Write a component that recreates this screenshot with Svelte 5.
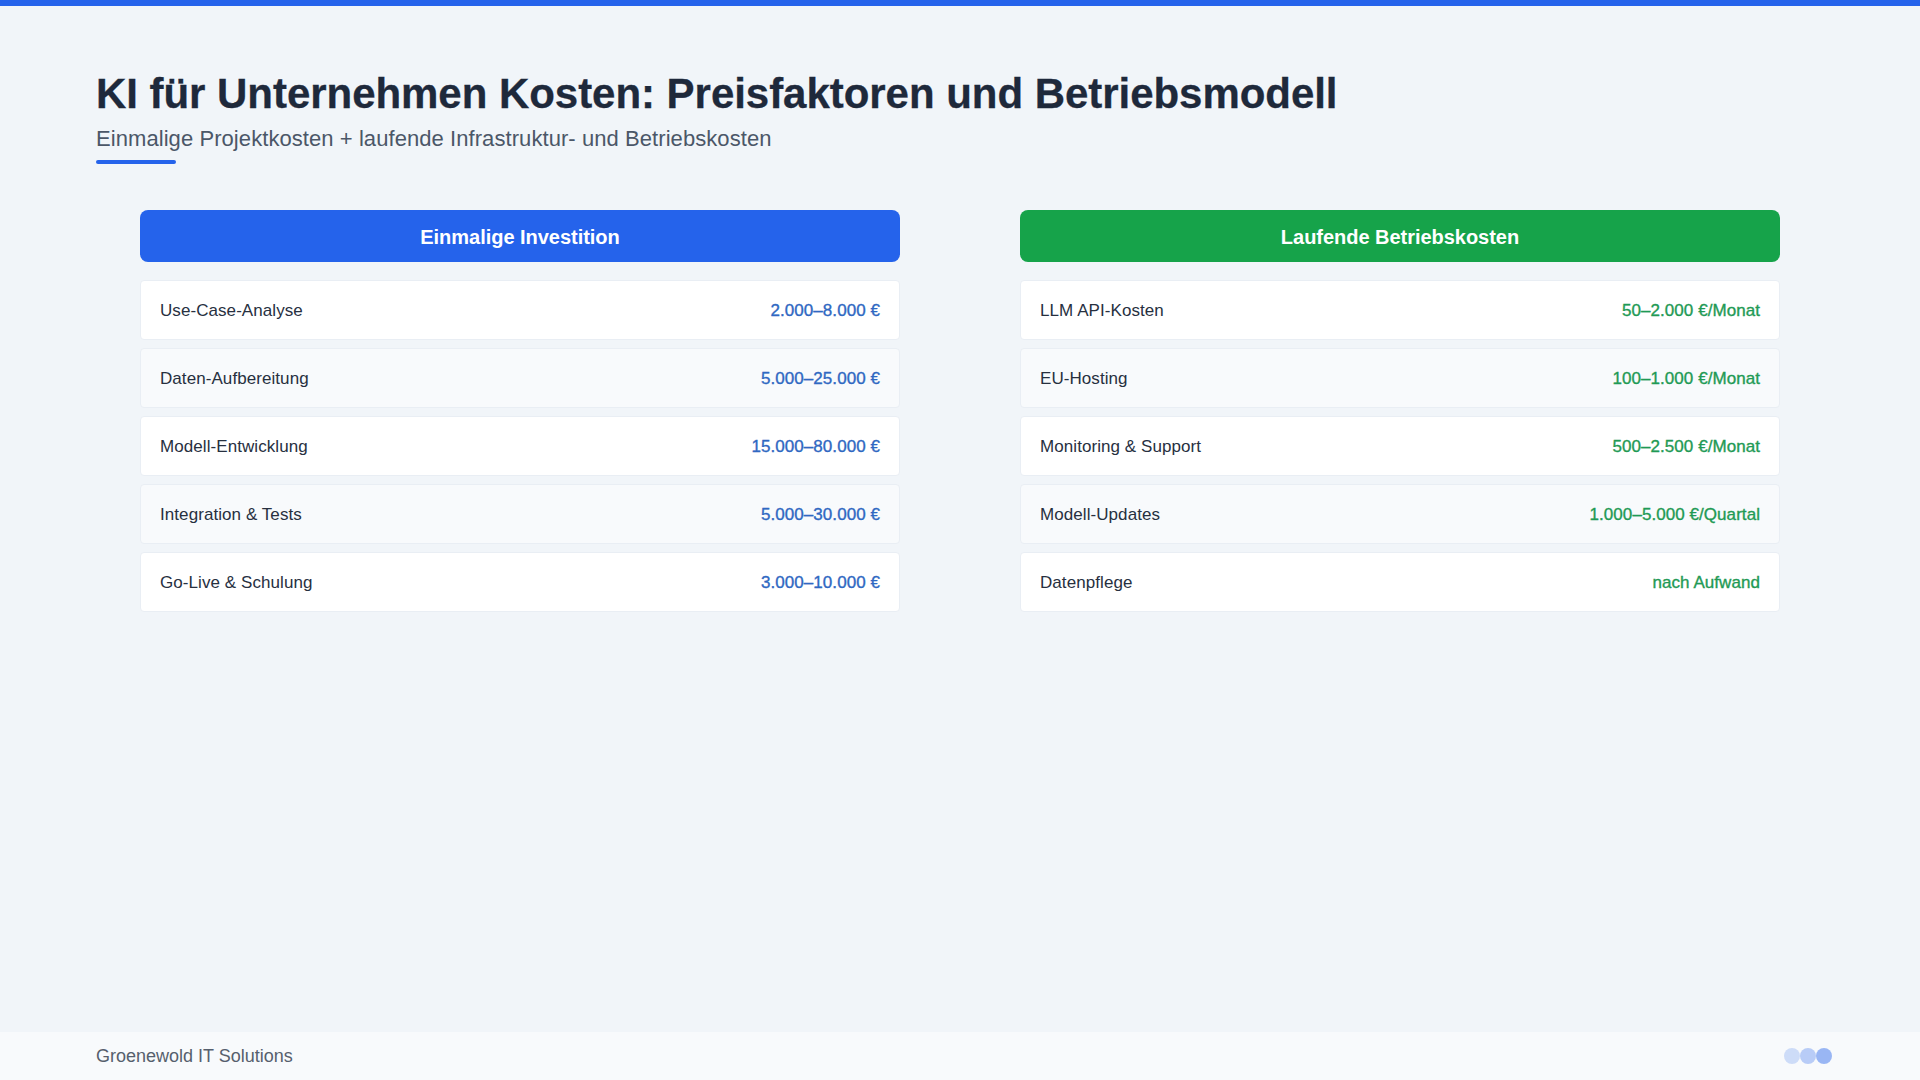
<script>
  const left = [
    ['Use-Case-Analyse', '2.000–8.000 €'],
    ['Daten-Aufbereitung', '5.000–25.000 €'],
    ['Modell-Entwicklung', '15.000–80.000 €'],
    ['Integration & Tests', '5.000–30.000 €'],
    ['Go-Live & Schulung', '3.000–10.000 €']
  ];
  const right = [
    ['LLM API-Kosten', '50–2.000 €/Monat'],
    ['EU-Hosting', '100–1.000 €/Monat'],
    ['Monitoring & Support', '500–2.500 €/Monat'],
    ['Modell-Updates', '1.000–5.000 €/Quartal'],
    ['Datenpflege', 'nach Aufwand']
  ];
</script>

<div class="slide">
  <div class="topbar"></div>
  <header class="head">
    <h1>KI für Unternehmen Kosten: Preisfaktoren und Betriebsmodell</h1>
    <p>Einmalige Projektkosten + laufende Infrastruktur- und Betriebskosten</p>
    <div class="rule"></div>
  </header>
  <main class="cols">
    <section class="col blue">
      <h2>Einmalige Investition</h2>
      {#each left as [name, val]}
        <div class="row"><span class="name">{name}</span><span class="val">{val}</span></div>
      {/each}
    </section>
    <section class="col green">
      <h2>Laufende Betriebskosten</h2>
      {#each right as [name, val]}
        <div class="row"><span class="name">{name}</span><span class="val">{val}</span></div>
      {/each}
    </section>
  </main>
  <footer class="foot">
    <span>Groenewold IT Solutions</span>
    <div class="dots"><i class="d1"></i><i class="d2"></i><i class="d3"></i></div>
  </footer>
</div>

<style>
  :global(body) { margin: 0; }
  .slide {
    width: 1920px; height: 1080px; background: #f1f5f9;
    display: flex; flex-direction: column; overflow: hidden;
    font-family: "Liberation Sans", Arial, sans-serif;
  }
  .topbar { height: 6px; background: #2563eb; flex: none; }
  .head { padding: 60px 96px 0; flex: none; }
  h1 { margin: 0; font-size: 42px; line-height: 56px; font-weight: 700; color: #1e293b; letter-spacing: -0.04px; -webkit-text-stroke: 0.3px currentColor; }
  .head p { margin: 0; padding-top: 2px; font-size: 22px; line-height: 30px; color: #4b5768; letter-spacing: 0.07px; }
  .rule { width: 80px; height: 4px; border-radius: 2px; background: #2563eb; margin-top: 6px; }
  .cols { flex: 1; display: grid; grid-template-columns: 760px 760px; gap: 120px; padding: 46px 140px 0; align-content: start; }
  .col { display: flex; flex-direction: column; gap: 8px; }
  h2 {
    margin: 0 0 10px; height: 52px; line-height: 54px; border-radius: 8px; text-align: center;
    color: #fff; font-size: 20px; font-weight: 700; letter-spacing: -0.03px;
  }
  .blue h2 { background: #2563eb; }
  .green h2 { background: #16a34a; }
  .row {
    height: 60px; box-sizing: border-box; padding: 1px 19px 0; display: flex; justify-content: space-between; align-items: center;
    background: #fff; border: 1px solid #e9eef4; border-radius: 4px; font-size: 17px;
  }
  .row:nth-of-type(even) { background: #f8fafc; }
  .name { color: #27303f; letter-spacing: 0.07px; }
  .val { letter-spacing: 0.06px; -webkit-text-stroke: 0.35px currentColor; }
  .blue .val { color: #2f68c2; }
  .green .val { color: #1f9a55; }
  .foot {
    flex: none; height: 48px; background: #f8fafc; padding: 0 88px 0 96px;
    display: flex; justify-content: space-between; align-items: center; font-size: 18px; color: #565f6d;
  }
  .dots { display: flex; }
  .dots i { width: 16px; height: 16px; border-radius: 50%; background: #2563eb; display: block; }
  .d1 { opacity: 0.2; }
  .d2 { opacity: 0.3; }
  .d3 { opacity: 0.45; }
</style>
